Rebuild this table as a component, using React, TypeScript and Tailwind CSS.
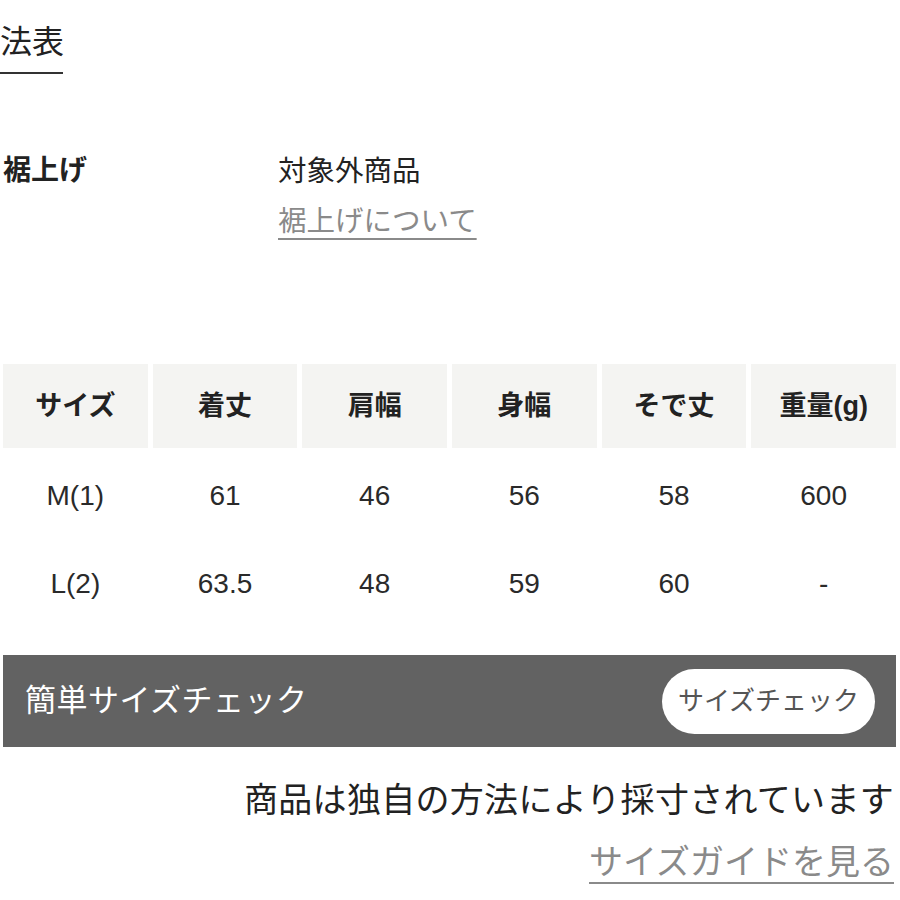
const font = { fontFamily: '"Liberation Sans", "Noto Sans CJK JP", sans-serif' }

const headers = ["サイズ", "着丈", "肩幅", "身幅", "そで丈", "重量(g)"]
const rows = [
    ["M(1)", "61", "46", "56", "58", "600"],
    ["L(2)", "63.5", "48", "59", "60", "-"],
]

export default function App() {
    return (
        <div className="w-[900px] h-[900px] overflow-hidden bg-white text-[#222]" style={font}>
            {/* title */}
            <div className="pt-[22px]">
                <div className="inline-block w-[63px] border-b-2 border-[#333] pb-[10px] text-[32px] leading-[40px] whitespace-nowrap">
                    法表
                </div>
            </div>

            {/* hem */}
            <div className="mt-[72px] flex">
                <div className="w-[278px] pl-[3px] text-[28px] leading-[50px] font-bold">裾上げ</div>
                <div className="flex flex-col text-[28.5px] leading-[50px]">
                    <span>対象外商品</span>
                    <a className="text-[#8a8a8a] underline decoration-[1.5px] underline-offset-[7px]">裾上げについて</a>
                </div>
            </div>

            {/* size table */}
            <div className="mt-[118px] pl-[3px] pr-[4px]">
                <div className="grid grid-cols-6 gap-[5px]">
                    {headers.map(h => (
                        <div key={h} className="h-[84px] bg-[#f4f4f2] flex items-center justify-center text-[27px] font-bold">
                            {h}
                        </div>
                    ))}
                </div>
                <div className="mt-[4px]">
                    {rows.map(r => (
                        <div key={r[0]} className="grid grid-cols-6 gap-[5px] h-[88px]">
                            {r.map((c, i) => (
                                <div key={i} className="flex items-center justify-center text-[28px] text-[#2a2a2a]">
                                    {c}
                                </div>
                            ))}
                        </div>
                    ))}
                </div>
            </div>

            {/* quick check bar */}
            <div className="mt-[27px] ml-[3px] w-[893px] h-[92px] bg-[#626262] flex items-center justify-between pl-[22px] pr-[21px]">
                <span className="text-white text-[31px] tracking-[0.5px]">簡単サイズチェック</span>
                <button className="w-[213px] h-[65px] rounded-full bg-white text-[#555] text-[26px] flex items-center justify-center">
                    サイズチェック
                </button>
            </div>

            {/* notes */}
            <div className="flex flex-col items-end pr-[6px] mt-[31px]">
                <span className="text-[34px] tracking-[0.3px] leading-[44px]">商品は独自の方法により採寸されています</span>
                <a className="mt-[18px] text-[34px] leading-[44px] text-[#8a8a8a] underline decoration-[1.5px] underline-offset-[8px]">
                    サイズガイドを見る
                </a>
            </div>
        </div>
    )
}
